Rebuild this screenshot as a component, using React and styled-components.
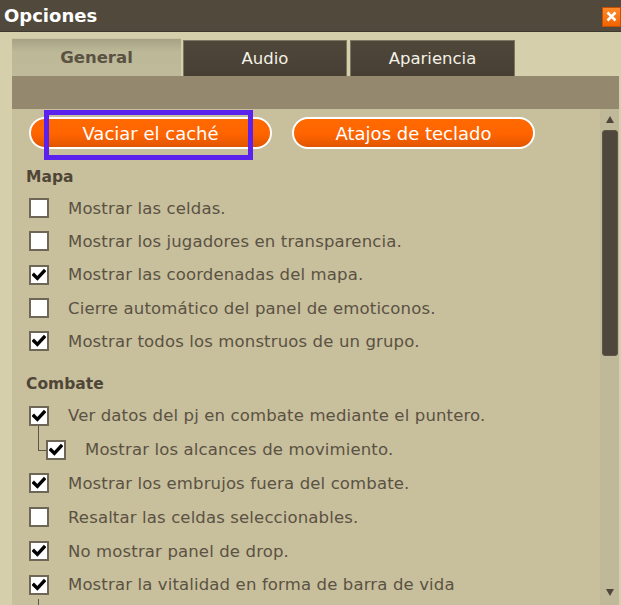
import React from 'react';
import styled, { createGlobalStyle, css } from 'styled-components';

const GlobalStyle = createGlobalStyle`
  html, body { margin: 0; padding: 0; background: #d5cfab; }
  body { font-family: "DejaVu Sans", Verdana, sans-serif; }
  * { box-sizing: border-box; }
`;

const Window = styled.div`
  width: 621px;
  height: 605px;
  display: flex;
  flex-direction: column;
  background: #d5cfab;
  overflow: hidden;
`;

const TitleBar = styled.div`
  height: 32px;
  flex: none;
  display: flex;
  align-items: center;
  justify-content: space-between;
  padding-left: 4px;
  background: #51493c;
  border-bottom: 1px solid #3f382e;
`;

const Title = styled.h1`
  margin: 0;
  font-size: 18px;
  font-weight: bold;
  color: #fff;
`;

const CloseButton = styled.button`
  width: 19px;
  height: 20px;
  margin-top: 2px;
  padding: 0;
  border: 1px solid #c94f00;
  background: linear-gradient(#ff8a2a, #f06400);
  display: flex;
  align-items: center;
  justify-content: center;
`;

const Body = styled.div`
  flex: 1;
  min-height: 0;
  display: flex;
  flex-direction: column;
  padding: 6px 2px 0 12px;
`;

const TabRow = styled.div`
  height: 38px;
  flex: none;
  display: flex;
  align-items: flex-end;
`;

const Tab = styled.div`
  width: ${(p) => p.$w}px;
  margin-right: ${(p) => p.$gap}px;
  display: flex;
  align-items: center;
  justify-content: center;
  font-size: 16.5px;
  ${(p) =>
    p.$active
      ? css`
          height: 38px;
          font-weight: bold;
          color: #5a5242;
          background: linear-gradient(#a7a284, #bdb898 35%, #bfba9a);
          border-top: 1px solid #c9c5a6;
        `
      : css`
          height: 36px;
          color: #f4f1e6;
          background: linear-gradient(#4f473a, #473f33);
          border: 1px solid #7d7663;
          border-bottom: none;
        `}
`;

const Band = styled.div`
  height: 33px;
  flex: none;
  background: #94886f;
`;

const Content = styled.div`
  flex: 1;
  min-height: 0;
  display: flex;
  background: #c8bf9d;
  overflow: hidden;
`;

const List = styled.div`
  flex: 1;
  padding: 8px 0 0 14px;
  display: flex;
  flex-direction: column;
`;

const ButtonRow = styled.div`
  position: relative;
  display: flex;
  gap: 20px;
  padding-left: 3px;
`;

const Pill = styled.button`
  width: 243px;
  height: 32px;
  border: 2px solid #fff;
  border-radius: 16px;
  background: linear-gradient(#ff6a00, #ff6400 55%, #e05500);
  color: #fff;
  font-family: "DejaVu Sans", Verdana, sans-serif;
  font-size: 18px;
  padding: 0;
`;

const Highlight = styled.div`
  position: absolute;
  left: 18px;
  top: -7px;
  width: 209px;
  height: 50px;
  border: 5px solid #5b22ee;
  pointer-events: none;
`;

const SectionTitle = styled.h2`
  margin: ${(p) => p.$top}px 0 0 0;
  height: 30px;
  display: flex;
  align-items: center;
  font-size: 15.5px;
  font-weight: bold;
  color: #4f4637;
`;

const Row = styled.div`
  position: relative;
  height: ${(p) => p.$h}px;
  display: flex;
  align-items: center;
  gap: 19px;
  padding-left: ${(p) => (p.$child ? 20 : 3)}px;
  font-size: 16.5px;
  letter-spacing: 0.14px;
  color: #5a5242;

  ${(p) =>
    p.$child &&
    css`
      &::before {
        content: '';
        position: absolute;
        left: 12px;
        top: -7px;
        width: 7px;
        height: 24px;
        border-left: 1px solid #5e5646;
        border-bottom: 1px solid #5e5646;
      }
    `}

  ${(p) =>
    p.$parent &&
    css`
      &::after {
        content: '';
        position: absolute;
        left: 12px;
        top: 31px;
        width: 1px;
        height: 10px;
        background: #5e5646;
      }
    `}
`;

const Box = styled.span`
  width: 20px;
  height: 20px;
  flex: none;
  background: #fff;
  border: 2px solid #6e6757;
  display: flex;
  align-items: center;
  justify-content: center;
`;

const Scrollbar = styled.div`
  width: 19px;
  flex: none;
  display: flex;
  flex-direction: column;
  align-items: center;
  background: #bfb99a;
`;

const Arrow = styled.div`
  height: 20px;
  display: flex;
  align-items: center;
  justify-content: center;
  margin-bottom: ${(p) => (p.$down ? 3 : 0)}px;
  margin-top: ${(p) => (p.$down ? 'auto' : '0')};

  &::before {
    content: '';
    width: 0;
    height: 0;
    border-left: 4px solid transparent;
    border-right: 4px solid transparent;
    ${(p) =>
      p.$down
        ? 'border-top: 7px solid #4f473b;'
        : 'border-bottom: 7px solid #4f473b;'}
  }
`;

const Thumb = styled.div`
  width: 16px;
  height: 226px;
  margin-top: 1px;
  border-radius: 3px;
  background: #4f473b;
  border: 1px solid #5d5547;
`;

const Check = () => (
  <svg width="14" height="14" viewBox="0 0 14 14">
    <path d="M2 7 L5.4 10.4 L12 3.2" fill="none" stroke="#000" strokeWidth="3.4" strokeLinecap="square" />
  </svg>
);

const Option = ({ checked, label, child, parent, h }) => (
  <Row $child={child} $parent={parent} $h={h}>
    <Box>{checked && <Check />}</Box>
    <span>{label}</span>
  </Row>
);

const mapa = [
  { label: 'Mostrar las celdas.', checked: false },
  { label: 'Mostrar los jugadores en transparencia.', checked: false },
  { label: 'Mostrar las coordenadas del mapa.', checked: true },
  { label: 'Cierre automático del panel de emoticonos.', checked: false },
  { label: 'Mostrar todos los monstruos de un grupo.', checked: true },
];

const combate = [
  { label: 'Ver datos del pj en combate mediante el puntero.', checked: true },
  { label: 'Mostrar los alcances de movimiento.', checked: true, child: true },
  { label: 'Mostrar los embrujos fuera del combate.', checked: true },
  { label: 'Resaltar las celdas seleccionables.', checked: false },
  { label: 'No mostrar panel de drop.', checked: true },
  { label: 'Mostrar la vitalidad en forma de barra de vida', checked: true, parent: true },
];

export default function App() {
  return (
    <>
      <GlobalStyle />
      <Window>
        <TitleBar>
          <Title>Opciones</Title>
          <CloseButton aria-label="Cerrar">
            <svg width="11" height="11" viewBox="0 0 11 11">
              <path d="M1.5 1.5 L9.5 9.5 M9.5 1.5 L1.5 9.5" stroke="#fff" strokeWidth="2.6" />
            </svg>
          </CloseButton>
        </TitleBar>
        <Body>
          <TabRow>
            <Tab $active $w={169} $gap={2}>General</Tab>
            <Tab $w={164} $gap={3}>Audio</Tab>
            <Tab $w={165} $gap={0}>Apariencia</Tab>
          </TabRow>
          <Band />
          <Content>
            <List>
              <ButtonRow>
                <Pill>Vaciar el caché</Pill>
                <Pill>Atajos de teclado</Pill>
                <Highlight />
              </ButtonRow>
              <SectionTitle $top={12.5}>Mapa</SectionTitle>
              {mapa.map((o) => (
                <Option key={o.label} h={33.3} {...o} />
              ))}
              <SectionTitle $top={11}>Combate</SectionTitle>
              {combate.map((o) => (
                <Option key={o.label} h={33.8} {...o} />
              ))}
            </List>
            <Scrollbar>
              <Arrow />
              <Thumb />
              <Arrow $down />
            </Scrollbar>
          </Content>
        </Body>
      </Window>
    </>
  );
}
